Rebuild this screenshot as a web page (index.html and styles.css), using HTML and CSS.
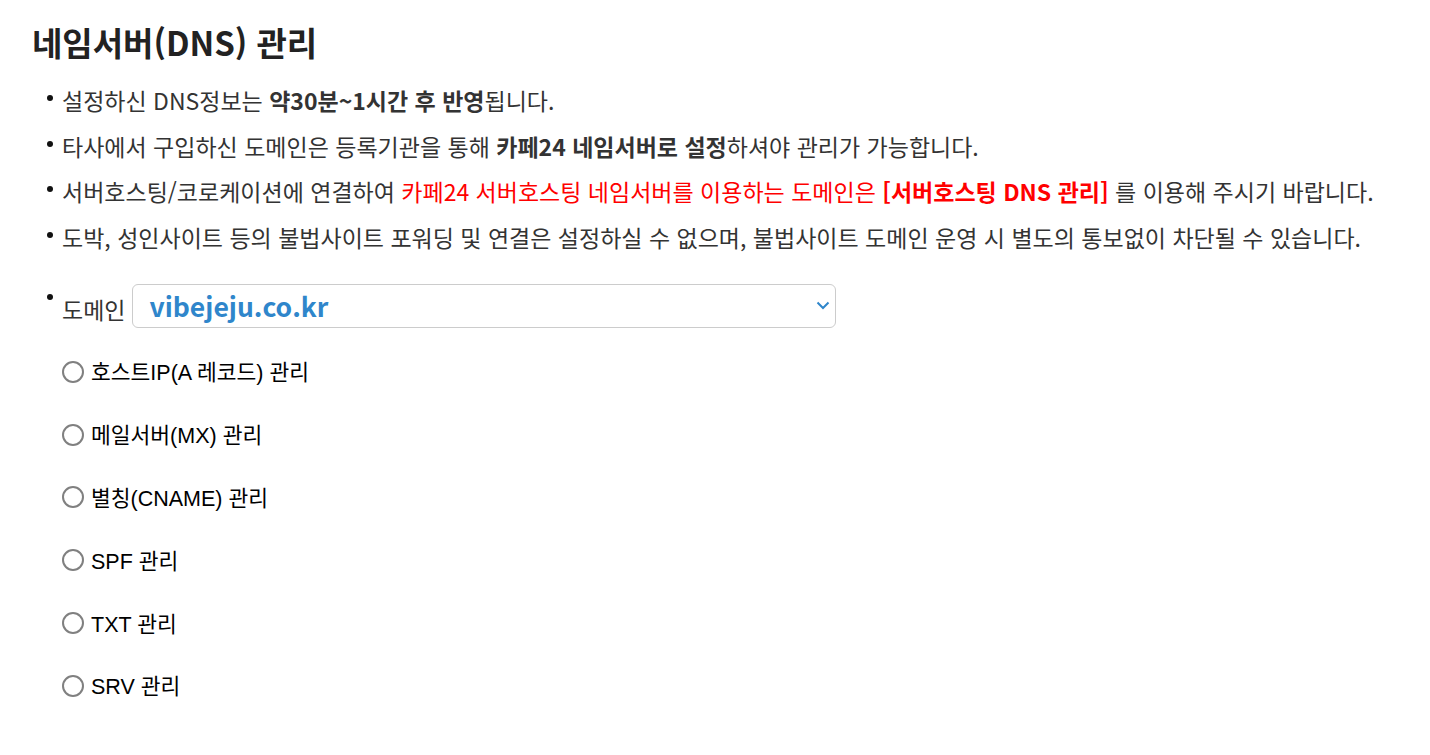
FILE: index.html
```html
<!DOCTYPE html>
<html lang="ko">
<head>
  <meta charset="UTF-8" />
  <meta name="viewport" content="width=device-width, initial-scale=1.0"/>
  <title>네임서버(DNS) 관리</title>
  <link rel="stylesheet" href="styles.css">
</head>
<body>
  <div class="container">
    <h1>네임서버(DNS) 관리</h1>
    <ul class="notice">
      <li>설정하신 DNS정보는 <b>약30분~1시간 후 반영</b>됩니다.</li>
      <li>타사에서 구입하신 도메인은 등록기관을 통해 <b>카페24 네임서버로 설정</b>하셔야 관리가 가능합니다.</li>
      <li>서버호스팅/코로케이션에 연결하여 <span class="red">카페24 서버호스팅 네임서버를 이용하는 도메인은 <b>[서버호스팅 DNS 관리]</b></span> 를 이용해 주시기 바랍니다.</li>
      <li>도박, 성인사이트 등의 불법사이트 포워딩 및 연결은 설정하실 수 없으며, 불법사이트 도메인 운영 시 별도의 통보없이 차단될 수 있습니다.</li>
    </ul>

    <div class="domain-row">
      <span class="dot"></span>
      <label for="domain">도메인</label>
      <div class="select">
        <span id="domain">vibejeju.co.kr</span>
        <svg width="14" height="9" viewBox="0 0 14 9"><path d="M1.5 1.5 7 7l5.5-5.5" fill="none" stroke="#2f86cb" stroke-width="2"/></svg>
      </div>
    </div>

    <div class="options">
      <label class="option"><span class="radio"></span>호스트IP(A 레코드) 관리</label>
      <label class="option"><span class="radio"></span>메일서버(MX) 관리</label>
      <label class="option"><span class="radio"></span>별칭(CNAME) 관리</label>
      <label class="option"><span class="radio"></span>SPF 관리</label>
      <label class="option"><span class="radio"></span>TXT 관리</label>
      <label class="option"><span class="radio"></span>SRV 관리</label>
    </div>
  </div>
</body>
</html>
```

FILE: styles.css
```css
body { margin: 0; font-family: "Noto Sans CJK KR", "Noto Sans", sans-serif; color: #333; background: #fff; }
.container { padding: 18px 0 0 32px; }
h1 { margin: 0; font-size: 33px; font-weight: bold; line-height: 48px; color: #222; }

.notice { list-style: none; margin: 19px 0 0; padding: 0; }
.notice li { display: flex; align-items: center; font-size: 23px; line-height: 30px; margin-bottom: 15.5px; white-space: pre; }
.notice li::before { content: ""; width: 6px; height: 6px; border-radius: 50%; background: #111; margin: -4px 9px 0 15px; flex: none; }
.notice b { font-weight: bold; }
.red { color: #ff0000; }

.domain-row { display: flex; align-items: flex-start; margin-top: 32px; }
.dot { width: 6px; height: 6px; border-radius: 50%; background: #111; margin: 10px 9px 0 15px; flex: none; }
.domain-row label { font-size: 23px; line-height: 30px; margin-top: 10px; margin-right: 7px; }
.select { width: 681px; height: 42px; border: 1px solid #ccc; border-radius: 6px; display: flex; align-items: center; justify-content: space-between; padding: 0 5px 0 16px; }
.select span { font-size: 26.5px; font-weight: bold; color: #2f86cb; }

.options { display: flex; flex-direction: column; padding-left: 30px; margin-top: 12px; }
.option { display: flex; align-items: center; height: 62.8px; font-family: "Liberation Sans", Arial, "Noto Sans CJK KR", sans-serif; font-size: 21.5px; color: #000; }
.radio { width: 18px; height: 18px; border: 2px solid #808080; border-radius: 50%; margin-right: 7px; margin-top: 2px; flex: none; }
```
